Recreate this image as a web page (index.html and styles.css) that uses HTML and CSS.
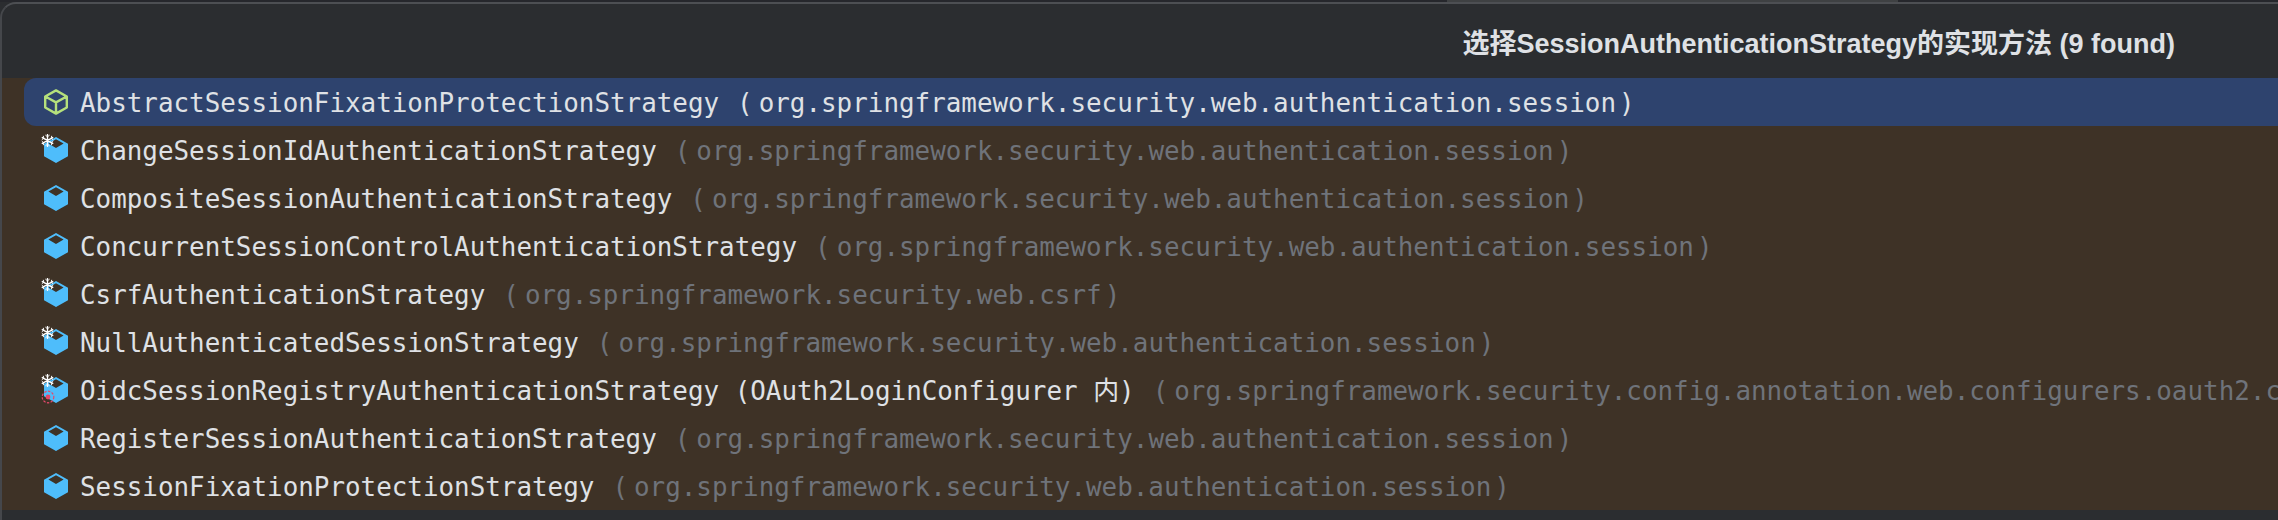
FILE: index.html
```html
<!DOCTYPE html>
<html lang="zh">
<head>
<meta charset="utf-8">
<title>选择SessionAuthenticationStrategy的实现方法</title>
<link rel="stylesheet" href="styles.css">
</head>
<body>
<svg class="defs" width="0" height="0" aria-hidden="true">
  <defs>
    <g id="frost" fill="none" stroke="#fff" stroke-width="1.5" stroke-linecap="round">
      <path d="M7 0.5V13.5M1.4 3.8L12.6 10.2M12.6 3.8L1.4 10.2"/>
      <path d="M5 1.4L7 3L9 1.4M5 12.6L7 11L9 12.6M1.2 6L3 4.6L2.6 2.4M12.8 6L11 4.6L11.4 2.4M1.2 8L3 9.4L2.6 11.6M12.8 8L11 9.4L11.4 11.6" stroke-width="1"/>
    </g>
    <path id="solid" fill-rule="evenodd" fill="#4ebdfb" d="M12 0L24 6.8V19.2L12 26L0 19.2V6.8ZM12 2.2L4.4 6.6L12 11L19.6 6.6Z"/>
  </defs>
</svg>
<div class="top-strip"></div>
<main class="popup">
  <header class="title-bar">
    <h1 class="title">选择SessionAuthenticationStrategy的实现方法 (9 found)</h1>
  </header>
  <ul class="list">
    <li class="row selected">
      <svg class="icon" viewBox="0 0 24 26"><path fill="none" stroke="#b5e07c" stroke-width="2.4" stroke-linejoin="round" d="M12 1.4L22.8 7.5V18.5L12 24.6L1.2 18.5V7.5ZM1.8 7.8L12 13.4L22.2 7.8M12 13.4V24"/></svg>
      <span class="name">AbstractSessionFixationProtectionStrategy</span><span class="pkg"><span class="open">(</span>org.springframework.security.web.authentication.session<span class="close">)</span></span>
    </li>
    <li class="row">
      <span class="icon-wrap"><svg class="icon" viewBox="0 0 24 26"><use href="#solid"/></svg><svg class="badge-frost" viewBox="0 0 14 14"><use href="#frost"/></svg></span>
      <span class="name">ChangeSessionIdAuthenticationStrategy</span><span class="pkg"><span class="open">(</span>org.springframework.security.web.authentication.session<span class="close">)</span></span>
    </li>
    <li class="row">
      <svg class="icon" viewBox="0 0 24 26"><use href="#solid"/></svg>
      <span class="name">CompositeSessionAuthenticationStrategy</span><span class="pkg"><span class="open">(</span>org.springframework.security.web.authentication.session<span class="close">)</span></span>
    </li>
    <li class="row">
      <svg class="icon" viewBox="0 0 24 26"><use href="#solid"/></svg>
      <span class="name">ConcurrentSessionControlAuthenticationStrategy</span><span class="pkg"><span class="open">(</span>org.springframework.security.web.authentication.session<span class="close">)</span></span>
    </li>
    <li class="row">
      <span class="icon-wrap"><svg class="icon" viewBox="0 0 24 26"><use href="#solid"/></svg><svg class="badge-frost" viewBox="0 0 14 14"><use href="#frost"/></svg></span>
      <span class="name">CsrfAuthenticationStrategy</span><span class="pkg"><span class="open">(</span>org.springframework.security.web.csrf<span class="close">)</span></span>
    </li>
    <li class="row">
      <span class="icon-wrap"><svg class="icon" viewBox="0 0 24 26"><use href="#solid"/></svg><svg class="badge-frost" viewBox="0 0 14 14"><use href="#frost"/></svg></span>
      <span class="name">NullAuthenticatedSessionStrategy</span><span class="pkg"><span class="open">(</span>org.springframework.security.web.authentication.session<span class="close">)</span></span>
    </li>
    <li class="row">
      <span class="icon-wrap"><svg class="icon" viewBox="0 0 24 26"><use href="#solid"/></svg><svg class="badge-frost" viewBox="0 0 14 14"><use href="#frost"/></svg><svg class="badge-private" viewBox="0 0 14 14"><circle cx="7" cy="7" r="5.8" fill="none" stroke="#e5486b" stroke-width="1.2" stroke-dasharray="2.4 1.4"/><circle cx="7" cy="7" r="2.4" fill="#e5486b"/></svg></span>
      <span class="name">OidcSessionRegistryAuthenticationStrategy (OAuth2LoginConfigurer 内)</span><span class="pkg"><span class="open">(</span>org.springframework.security.config.annotation.web.configurers.oauth2.c</span>
    </li>
    <li class="row">
      <svg class="icon" viewBox="0 0 24 26"><use href="#solid"/></svg>
      <span class="name">RegisterSessionAuthenticationStrategy</span><span class="pkg"><span class="open">(</span>org.springframework.security.web.authentication.session<span class="close">)</span></span>
    </li>
    <li class="row">
      <svg class="icon" viewBox="0 0 24 26"><use href="#solid"/></svg>
      <span class="name">SessionFixationProtectionStrategy</span><span class="pkg"><span class="open">(</span>org.springframework.security.web.authentication.session<span class="close">)</span></span>
    </li>
  </ul>
</main>
</body>
</html>
```
FILE: styles.css
```css
* { box-sizing: border-box; }
html, body { margin: 0; padding: 0; background: #2b2d30; height: 520px; overflow: hidden; }
.defs { display: block; height: 0; }
.top-strip {
  height: 2px;
  background: linear-gradient(to right, #26272c 1447px, #3f4143 1447px, #3f4143 1898px, #26272c 1898px);
}
.popup {
  height: 518px;
  background: #2b2d30;
  border-top: 2px solid #4d4f53;
  border-left: 2px solid #45474b;
  border-top-left-radius: 16px;
  overflow: hidden;
}
.title-bar { height: 74px; display: flex; justify-content: flex-end; align-items: center; padding: 5px 103px 0 0; }
.title {
  margin: 0;
  font: bold 27px/32px "Liberation Sans", "Noto Sans CJK SC", sans-serif;
  color: #dfe1e5;
  white-space: nowrap;
}
.list { margin: 0; padding: 0; list-style: none; background: #3e3226; height: 432px; }
.row {
  height: 48px;
  margin-left: 22px;
  padding-left: 20px;
  display: flex;
  align-items: center;
  white-space: nowrap;
  font: 25.9px/32px "DejaVu Sans Mono", "Noto Sans CJK SC", monospace;
  color: #dfe1e5;
}
.row.selected { background: #2e436e; border-radius: 12px 0 0 12px; }
.icon { display: block; width: 24px; height: 26px; flex: none; }
.icon-wrap { position: relative; display: block; width: 24px; height: 26px; flex: none; }
.badge-frost { position: absolute; left: -3px; top: -3px; width: 13px; height: 13px; }
.badge-private { position: absolute; left: -3px; top: 13px; width: 14px; height: 14px; }
.name { margin-left: 12px; padding-top: 2px; }
.pkg { margin-left: 18px; padding-top: 2px; color: #6f737a; }
.open { margin-right: 6px; }
.close { margin-left: 3px; }
.row.selected .pkg { color: #dfe1e5; }
```
